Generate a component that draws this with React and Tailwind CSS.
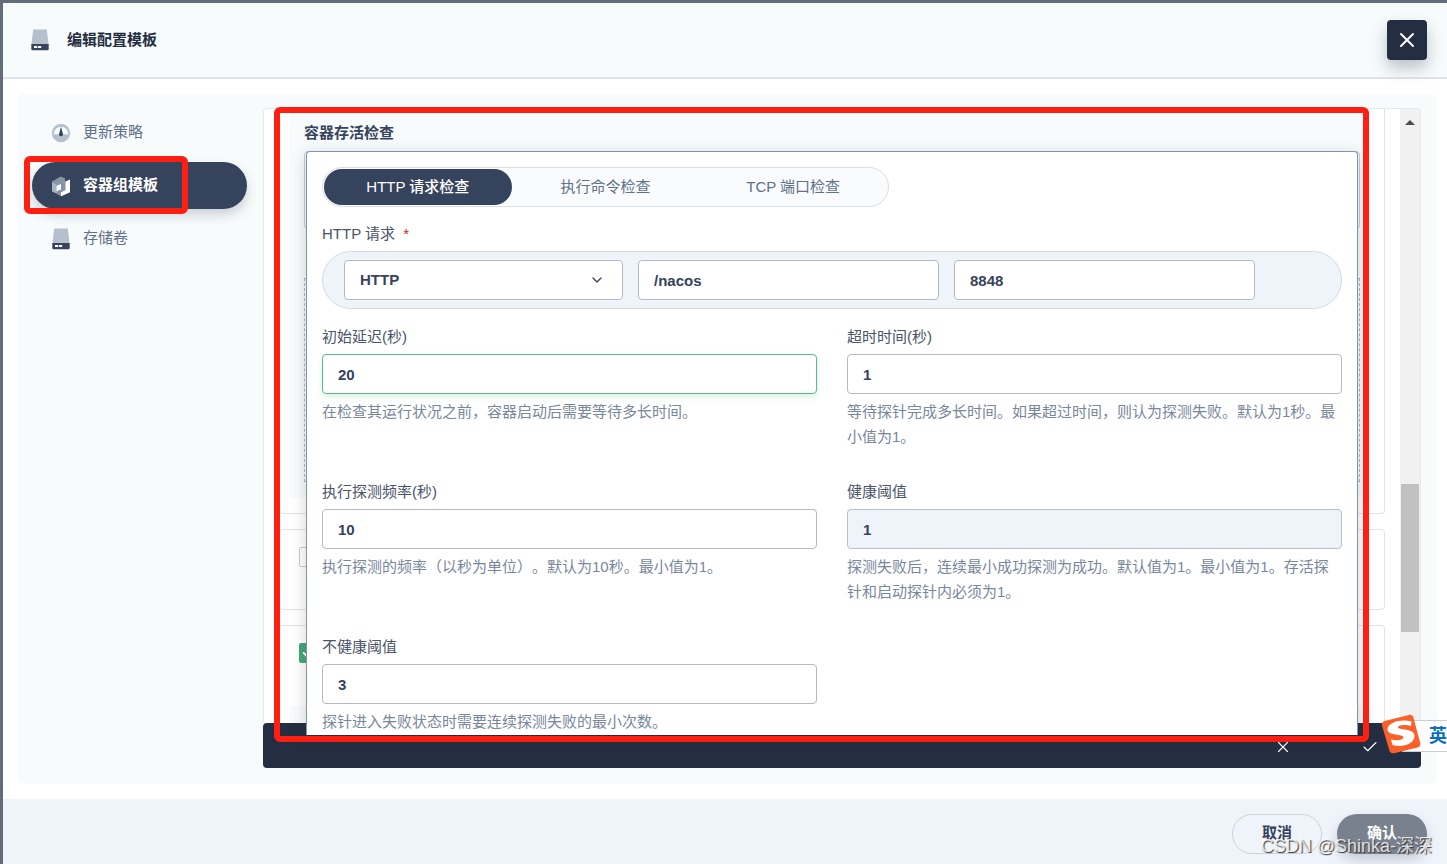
import { ChevronDown, X, Check } from 'lucide-react';

const navItems = [
  { label: '更新策略', icon: GaugeIcon },
  { label: '容器组模板', icon: CubeIcon, active: true },
  { label: '存储卷', icon: DiskIcon },
];

const fields = [
  {
    id: 'initial-delay',
    label: '初始延迟(秒)',
    value: '20',
    help: '在检查其运行状况之前，容器启动后需要等待多长时间。',
    focused: true,
  },
  {
    id: 'timeout',
    label: '超时时间(秒)',
    value: '1',
    help: '等待探针完成多长时间。如果超过时间，则认为探测失败。默认为1秒。最小值为1。',
  },
  {
    id: 'period',
    label: '执行探测频率(秒)',
    value: '10',
    help: '执行探测的频率（以秒为单位）。默认为10秒。最小值为1。',
  },
  {
    id: 'success-threshold',
    label: '健康阈值',
    value: '1',
    help: '探测失败后，连续最小成功探测为成功。默认值为1。最小值为1。存活探针和启动探针内必须为1。',
    disabled: true,
  },
  {
    id: 'failure-threshold',
    label: '不健康阈值',
    value: '3',
    help: '探针进入失败状态时需要连续探测失败的最小次数。',
  },
];

function DiskIcon() {
  return (
    <svg width="20" height="24" viewBox="0 0 20 24" aria-hidden="true">
      <path d="M3.2 1.500h13.600L18.600 17H1.400z" fill="#b5c0cd" />
      <path d="M1.300 16h17.400v5q0 1.300-1.300 1.300H2.600q-1.300 0-1.300-1.300z" fill="#36435c" />
      <rect x="4" y="18" width="3.2" height="2" fill="#fff" />
      <rect x="8" y="18" width="3.2" height="2" fill="#fff" />
    </svg>
  );
}

function GaugeIcon() {
  return (
    <svg width="20" height="20" viewBox="0 0 20 20" aria-hidden="true">
      <circle cx="10" cy="10" r="9.2" fill="#b5c0cd" />
      <path d="M2.600 11.200a7.400 7.400 0 1 1 14.800 0z" fill="#f7fbfc" />
      <path d="M10 3.800l2 7.400a2 2 0 1 1-4 0z" fill="#36435c" />
    </svg>
  );
}

function CubeIcon() {
  return (
    <svg width="20" height="22" viewBox="0 0 20 22" aria-hidden="true">
      <path d="M1 6.500l3.500-2 5-3L14 3.300v3.200l5-1.500v12L10 21.300l-9-5z" fill="#8793a7" />
      <path d="M1 7.500l4.500 2v8.800L1 16.300z" fill="#a9b4c3" />
      <path d="M5.500 10.800L10 9v5.400l-4.500 1.800z" fill="#fff" />
      <path d="M14.500 6.500L19 4.600v12.600l-9 4.100v-4.100l4.500-2z" fill="#fff" />
    </svg>
  );
}

function Field({ id, label, value, help, focused, disabled }) {
  return (
    <div className="flex flex-col">
      <label htmlFor={id} className="mb-[7px] leading-5 text-[#4a5468]">{label}</label>
      <input
        id={id}
        defaultValue={value}
        disabled={disabled}
        className={`h-10 w-full rounded border px-[15px] font-bold text-[#36435c] outline-none ${
          focused
            ? 'border-[#55bc8a] bg-white shadow-[0_3px_6px_rgba(85,188,138,0.22)]'
            : disabled
              ? 'border-[#b9c0ca] bg-[#eff4fb]'
              : 'border-[#b4bac4] bg-white'
        }`}
      />
      <p className="mt-[5px] leading-[25px] text-[#79879c]">{help}</p>
    </div>
  );
}

function ProbePopup() {
  return (
    <form className="absolute top-[43px] right-[63px] left-[43px] z-10 rounded-t border border-b-0 border-[#8693a4] bg-white px-[15px] pt-[15px] pb-px shadow-[0_4px_16px_rgba(36,46,66,0.2)]">
      <div className="flex h-10 w-[567px] max-w-full rounded-full border border-[#d8dee5] bg-[#f9fbfd] p-px">
        <button type="button" className="flex-1 rounded-full bg-[#36435c] font-medium text-white">HTTP 请求检查</button>
        <button type="button" className="flex-1 rounded-full text-[#5f708a]">执行命令检查</button>
        <button type="button" className="flex-1 rounded-full text-[#5f708a]">TCP 端口检查</button>
      </div>

      <label htmlFor="scheme" className="mt-[17px] mb-[7px] block leading-5 text-[#4a5468]">
        HTTP 请求 <span className="ml-1 text-[#ca2621]">*</span>
      </label>
      <div className="flex h-[58px] items-center gap-[15px] rounded-full border border-[#d3dae3] bg-[#eff4fb] pl-[21px]">
        <div className="relative w-[279px]">
          <select id="scheme" defaultValue="HTTP" className="h-10 w-full appearance-none rounded border border-[#b4bac4] bg-white px-[15px] font-bold text-[#36435c]">
            <option>HTTP</option>
            <option>HTTPS</option>
          </select>
          <ChevronDown className="pointer-events-none absolute top-3 right-[18px] size-4 text-[#36435c]" />
        </div>
        <input aria-label="路径" defaultValue="/nacos" className="h-10 w-[301px] rounded border border-[#b4bac4] bg-white px-[15px] font-bold text-[#36435c]" />
        <input aria-label="端口" defaultValue="8848" className="h-10 w-[301px] rounded border border-[#b4bac4] bg-white px-[15px] font-bold text-[#36435c]" />
      </div>

      <div className="mt-[18px] grid grid-cols-2 gap-x-[30px] gap-y-[33px]">
        {fields.map((field) => (
          <Field key={field.id} {...field} />
        ))}
      </div>
    </form>
  );
}

function CardStack() {
  return (
    <div className="flex min-w-0 flex-1 flex-col gap-[15px] overflow-hidden px-[15px]">
      <section className="h-[405px] rounded-b border border-t-0 border-[#e0e4ea] px-[9px] pb-[15px]">
        <div className="h-full rounded-b bg-[#f7fbfc] px-[15px] pt-3">
          <h2 className="leading-6 font-bold text-[#36435c]">容器存活检查</h2>
          <div className="mt-1.5 h-[78px] rounded border border-[#c5ccd6]" />
          <div className="mt-[49px] h-[204px] border border-dashed border-[#b0b7c2]" />
        </div>
      </section>
      <section className="h-[81px] rounded border border-[#e0e4ea] px-[19px] pt-[17px]">
        <input type="checkbox" aria-label="环境变量" className="block size-5 appearance-none rounded-[2px] border border-[#c5ccd6] bg-white" />
      </section>
      <section className="flex flex-1 flex-col justify-between rounded-t border border-b-0 border-[#e0e4ea] px-[9px] pt-[17px]">
        <div className="relative ml-2.5 size-5">
          <input type="checkbox" defaultChecked aria-label="时区" className="block size-5 appearance-none rounded-[2px] bg-[#44a679]" />
          <Check className="pointer-events-none absolute top-0.5 left-0.5 size-4 text-white" strokeWidth={3} />
        </div>
        <div className="h-[17px] rounded-t bg-[#f7fbfc]" />
      </section>
    </div>
  );
}

function Scrollbar() {
  return (
    <div className="w-5 bg-[#f1f1f1]" aria-hidden="true">
      <div className="mx-auto mt-[11px] size-0 border-x-[5px] border-b-[5px] border-x-transparent border-b-[#4d4d4d]" />
      <div className="mx-auto mt-[359px] h-[148px] w-[18px] bg-[#c1c1c1]" />
    </div>
  );
}

function InputMethodBadge() {
  return (
    <div className="absolute right-0 bottom-[112px] z-30" aria-hidden="true">
      <div className="flex h-8 w-[45px] items-center justify-end border-y border-[#c9ced6] bg-white text-lg font-bold text-[#0b6fc0]">英</div>
      <svg className="absolute -top-1.5 right-[26px] size-10" viewBox="0 0 40 40">
        <path d="M3.500 7L28 1q3.500-.8 4.400 2.500L39.200 29q.8 3.400-2.500 4.500L13 39.200q-3.600.6-4.700-3L1 11.500Q.2 8 3.500 7z" fill="#f9602a" />
        <path
          d="M30.500 7.500C21 4.500 6.500 8 6.500 15.500c0 6.500 16 4.200 16 7.800 0 3-7 3.700-12.500 2.200l1.500 5.500c9 3 22-.5 22-9.200 0-8-16.500-5.300-16.500-8.600 0-2.400 8-2.700 13-1z"
          fill="#fff"
        />
      </svg>
    </div>
  );
}

export default function App() {
  return (
    <div
      lang="zh-CN"
      className="relative flex min-h-screen flex-col overflow-hidden bg-[#636c7a] pt-[3px] pl-[3px] font-['Liberation_Sans','Noto_Sans_CJK_SC',sans-serif] text-[15px] [text-spacing-trim:space-all]"
    >
      <div className="flex flex-1 flex-col rounded-tl bg-white">
        <header className="flex h-[76px] items-center justify-between border-b-2 border-[#e0e4e9] bg-[#f7fbfc] pr-5 pl-[27px]">
          <div className="flex items-center gap-[17px] font-bold text-[#242e42]">
            <DiskIcon />
            <h1>编辑配置模板</h1>
          </div>
          <button type="button" aria-label="关闭" className="flex size-10 items-center justify-center rounded bg-[#242e42] text-white shadow-[0_8px_16px_rgba(36,46,66,0.28)]">
            <X className="size-6" />
          </button>
        </header>

        <main className="flex flex-1 p-[15px] pr-2.5">
          <div className="flex flex-1 gap-4 rounded-md bg-[#f7fbfc] pt-3.5 pr-4 pb-4 pl-3.5">
            <nav className="relative flex w-[215px] flex-col gap-1.5 pt-px">
              {navItems.map(({ label, icon: Icon, active }) => (
                <a
                  key={label}
                  href="#"
                  className={`flex h-[47px] items-center gap-3 rounded-full pl-[19px] ${
                    active ? 'bg-[#36435c] font-bold text-white shadow-[0_6px_12px_rgba(36,46,66,0.2)]' : 'text-[#5f708a]'
                  }`}
                >
                  <Icon />
                  {label}
                </a>
              ))}
              <div className="pointer-events-none absolute top-12 -left-2 h-[58px] w-[164px] rounded-md border-[6px] border-[#ff1e12]" />
            </nav>

            <div className="relative flex min-w-0 flex-1 flex-col">
              <div className="flex flex-1 rounded-t border border-b-0 border-[#e5e9ee] bg-white">
                <CardStack />
                <Scrollbar />
              </div>
              <div className="flex h-[45px] items-center justify-end gap-[69px] rounded bg-[#242e42] pt-0.5 pr-[42px] text-white">
                <button type="button" aria-label="取消编辑"><X className="size-[18px]" strokeWidth={1.5} /></button>
                <button type="button" aria-label="确认编辑"><Check className="size-[18px]" strokeWidth={1.5} /></button>
              </div>
              <ProbePopup />
              <div className="pointer-events-none absolute -top-px right-[52px] bottom-[26px] left-[11px] z-20 rounded-md border-[6px] border-[#ff1e12]" />
            </div>
          </div>
        </main>

        <footer className="flex h-[65px] items-center justify-end gap-[15px] bg-[#eff4fb] pt-1 pr-5 font-bold">
          <button type="button" className="h-10 w-[90px] rounded-full border border-[#ccd3db] text-[#36435c]">取消</button>
          <button type="button" className="h-10 w-[90px] rounded-full bg-[#79818f] text-white shadow-[0_6px_12px_rgba(36,46,66,0.2)]">确认</button>
        </footer>
      </div>

      <InputMethodBadge />
      <p className="absolute right-[15px] bottom-1.5 z-30 text-lg leading-6 text-white/80 [text-shadow:1px_1px_1px_#333]">CSDN @Shinka-深深</p>
    </div>
  );
}
